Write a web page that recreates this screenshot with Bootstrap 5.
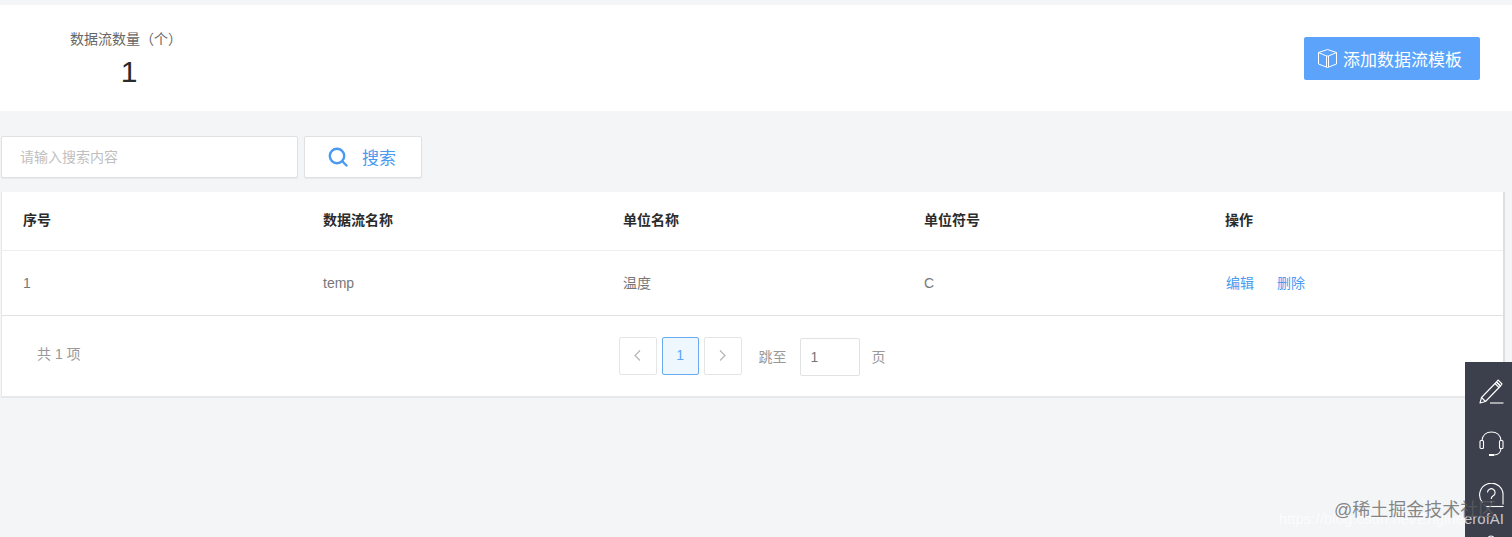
<!DOCTYPE html>
<html lang="zh-CN">
<head>
    <meta charset="UTF-8">
    <meta name="viewport" content="width=device-width, initial-scale=1.0">
    <title>数据流</title>
    <link href="https://cdn.jsdelivr.net/npm/bootstrap@5.3.0/dist/css/bootstrap.min.css" rel="stylesheet">
    <style>
        html, body {
            height: 537px;
            overflow: hidden;
        }
        body {
            background-color: #f3f5f7;
            font-family: "Liberation Sans", "Noto Sans CJK SC", sans-serif;
            font-size: 14px;
            color: #888;
            position: relative;
        }
        .stat-bar {
            margin-top: 5px;
            height: 106px;
            background: #fff;
            padding: 0 32px 0 70px;
        }
        .stat-box {
            width: 112px;
            padding-top: 24px;
        }
        .stat-label {
            color: #666;
            line-height: 20px;
            white-space: nowrap;
        }
        .stat-num {
            color: #2b2b2b;
            font-size: 30px;
            line-height: 36px;
            margin-top: 5px;
            margin-left: 6px;
        }
        .add-btn {
            width: 176px;
            height: 43px;
            margin-top: 32px;
            background: #5ca4fb;
            border: 0;
            border-radius: 2px;
            color: #fff;
            font-size: 17px;
            padding: 0 5px 0 0;
            gap: 5px;
        }
        .add-btn:hover { background: #5ca4fb; color: #fff; }
        .btn-label { margin-top: 4px; }
        .search-row {
            margin: 25px 0 14px 1px;
            gap: 6px;
        }
        .search-input {
            width: 297px;
            height: 42px;
            border: 1px solid #dfe1e3;
            border-radius: 2px;
            box-shadow: 0 1px 1px rgba(0, 0, 0, .05);
            font-size: 14px;
            padding: 0 18px;
        }
        .search-input::placeholder { color: #bfbfbf; }
        .search-btn {
            width: 118px;
            height: 42px;
            background: #fff;
            border: 1px solid #dfe1e3;
            border-radius: 2px;
            box-shadow: 0 1px 1px rgba(0, 0, 0, .05);
            color: #4a9af0;
            font-size: 17px;
            padding: 0 2px 0 0;
            gap: 14px;
        }
        .data-panel {
            width: 1504px;
            margin-left: 1px;
            background: #fff;
            border: 0;
            border-left: 1px solid #e6e8ea;
            border-right: 2px solid #dcdee0;
            border-bottom: 2px solid #e6e8ea;
            border-radius: 0;
        }
        .flow-table { table-layout: fixed; margin: 0; }
        .flow-table th, .flow-table td {
            padding: 0 0 0 21px;
            vertical-align: middle;
            border-color: #eceef0;
            font-size: 14px;
        }
        .flow-table th {
            height: 58px;
            color: #2b2b2b;
            font-weight: 700;
        }
        .flow-table td {
            height: 65px;
            padding-top: 2px;
            color: #777;
            border-bottom-color: #dfe1e3;
        }
        .col-a { width: 300px; }
        .col-b { width: 300px; }
        .col-c { width: 301px; }
        .col-d { width: 301px; }
        .op-link {
            color: #4a9af0;
            text-decoration: none;
            margin-right: 23px;
        }
        .op-first { margin-left: 1px; }
        .pager-row {
            height: 80px;
        }
        .total-text {
            width: 617px;
            padding: 0 0 2px 35px;
            color: #999;
        }
        .page-box {
            width: 37.5px;
            height: 38px;
            margin-right: 5px;
            background: #fff;
            border: 1px solid #e3e5e7;
            border-radius: 2px;
            color: #b5b5b5;
            font-size: 14px;
            padding: 0;
        }
        .page-now {
            background: #eef6fe;
            border-color: #6aaaf0;
            color: #5ca4fb;
        }
        .jump-text { color: #999; margin: 3px 13px 0 12px; }
        .jump-input {
            width: 60px;
            height: 38px;
            margin-top: 2px;
            border: 1px solid #e0e2e4;
            border-radius: 2px;
            font-size: 14px;
            color: #777;
            padding: 0 10px;
        }
        .float-tools {
            position: absolute;
            left: 1465px;
            top: 362px;
            width: 47px;
            height: 175px;
            background: #3c404d;
            padding: 17px 0 0 5px;
            gap: 27px;
            overflow: hidden;
        }
        .float-tools svg { display: block; flex: none; }
        .mark-cn, .mark-url {
            position: absolute;
            white-space: nowrap;
        }
        .mark-cn {
            left: 1334px;
            top: 498px;
            font-size: 18px;
            line-height: 24px;
            color: rgba(95, 95, 95, .75);
        }
        .mark-url {
            right: 8px;
            top: 510px;
            font-size: 15px;
            line-height: 18px;
            color: rgba(255, 255, 255, .72);
        }
    </style>
</head>
<body>
    <div class="stat-bar d-flex justify-content-between">
        <div class="stat-box text-center">
            <div class="stat-label">数据流数量（个）</div>
            <div class="stat-num">1</div>
        </div>
        <button class="btn add-btn d-flex align-items-center justify-content-center" type="button">
            <svg width="21" height="21" viewBox="0 0 21 21" fill="none" stroke="#fff" stroke-width="1" stroke-linejoin="round">
                <path d="M10.500 1.500L19.500 4.500V16L10.500 19.500L1.500 16V4.500z"/>
                <path d="M1.500 4.500L9.500 8V19M19.500 4.500L11.500 8V19M9.500 8h2"/>
            </svg>
            <span class="btn-label">添加数据流模板</span>
        </button>
    </div>

    <div class="search-row d-flex">
        <input class="form-control search-input" type="text" placeholder="请输入搜索内容">
        <button class="btn search-btn d-flex align-items-center justify-content-center" type="button">
            <svg width="20" height="20" viewBox="0 0 20 20" fill="none" stroke="#4a9af0" stroke-width="2.400" stroke-linecap="round">
                <circle cx="9" cy="9" r="7.200"/>
                <path d="M14.500 14.500l4 4"/>
            </svg>
            <span class="btn-label">搜索</span>
        </button>
    </div>

    <div class="card data-panel">
        <table class="table flow-table">
            <thead>
                <tr>
                    <th class="col-a">序号</th>
                    <th class="col-b">数据流名称</th>
                    <th class="col-c">单位名称</th>
                    <th class="col-d">单位符号</th>
                    <th>操作</th>
                </tr>
            </thead>
            <tbody>
                <tr>
                    <td>1</td>
                    <td>temp</td>
                    <td>温度</td>
                    <td>C</td>
                    <td><a class="op-link op-first" href="#">编辑</a><a class="op-link" href="#">删除</a></td>
                </tr>
            </tbody>
        </table>
        <div class="pager-row d-flex align-items-center">
            <div class="total-text">共 1 项</div>
            <button class="btn page-box d-flex align-items-center justify-content-center" type="button">
                <svg width="9" height="13" viewBox="0 0 9 13" fill="none" stroke="#b5b5b5" stroke-width="1.200"><path d="M7 1.500L2 6.500l5 5"/></svg>
            </button>
            <button class="btn page-box page-now d-flex align-items-center justify-content-center" type="button">1</button>
            <button class="btn page-box d-flex align-items-center justify-content-center" type="button">
                <svg width="9" height="13" viewBox="0 0 9 13" fill="none" stroke="#b5b5b5" stroke-width="1.200"><path d="M2 1.500l5 5-5 5"/></svg>
            </button>
            <span class="jump-text">跳至</span>
            <input class="form-control jump-input" type="text" value="1">
            <span class="jump-text">页</span>
        </div>
    </div>

    <div class="float-tools d-flex flex-column align-items-center">
        <svg width="25" height="25" viewBox="0 0 25 25" fill="none" stroke="#fff" stroke-width="1.100" stroke-linejoin="round">
            <path d="M1 24l1.500-5.500L17.500 3l4 4L6.500 22.500z"/>
            <path d="M2.500 18.500l4 4M16 4.500l4 4M19 1l4 4-1.500 2-4-4z"/>
            <path d="M11 24h13.500"/>
        </svg>
        <svg width="25" height="25" viewBox="0 0 25 25" fill="none" stroke="#fff" stroke-width="1.100">
            <path d="M3 9.500C3.500 4 7.500 1 12.500 1s9 3 9.500 8.500"/>
            <path d="M22 17c0 4.500-3 7-7 7"/>
            <rect x="1" y="9.500" width="3.500" height="8" rx="1"/>
            <rect x="20.500" y="9.500" width="3.500" height="8" rx="1"/>
            <path d="M10 24h5" stroke-width="2"/>
        </svg>
        <svg width="25" height="25" viewBox="0 0 25 25" fill="none" stroke="#fff" stroke-width="1.100">
            <path d="M3.500 19.500A11.700 11.700 0 1 1 24 13v8.500"/>
            <path d="M8.500 9.500a3.800 3.800 0 1 1 5.700 3.300c-1.500.9-2 1.700-2 3.200M12.200 18v1.500"/>
            <path d="M7 23.500h17.500"/>
        </svg>
        <svg width="25" height="25" viewBox="0 0 25 25" fill="none" stroke="#fff" stroke-width="1.100">
            <circle cx="12" cy="4" r="3"/>
        </svg>
    </div>

    <div class="mark-url">https://blog.csdn.net/EngineerofAI</div>
    <div class="mark-cn">@稀土掘金技术社区</div>

    <script src="https://cdn.jsdelivr.net/npm/bootstrap@5.3.0/dist/js/bootstrap.bundle.min.js"></script>
</body>
</html>
